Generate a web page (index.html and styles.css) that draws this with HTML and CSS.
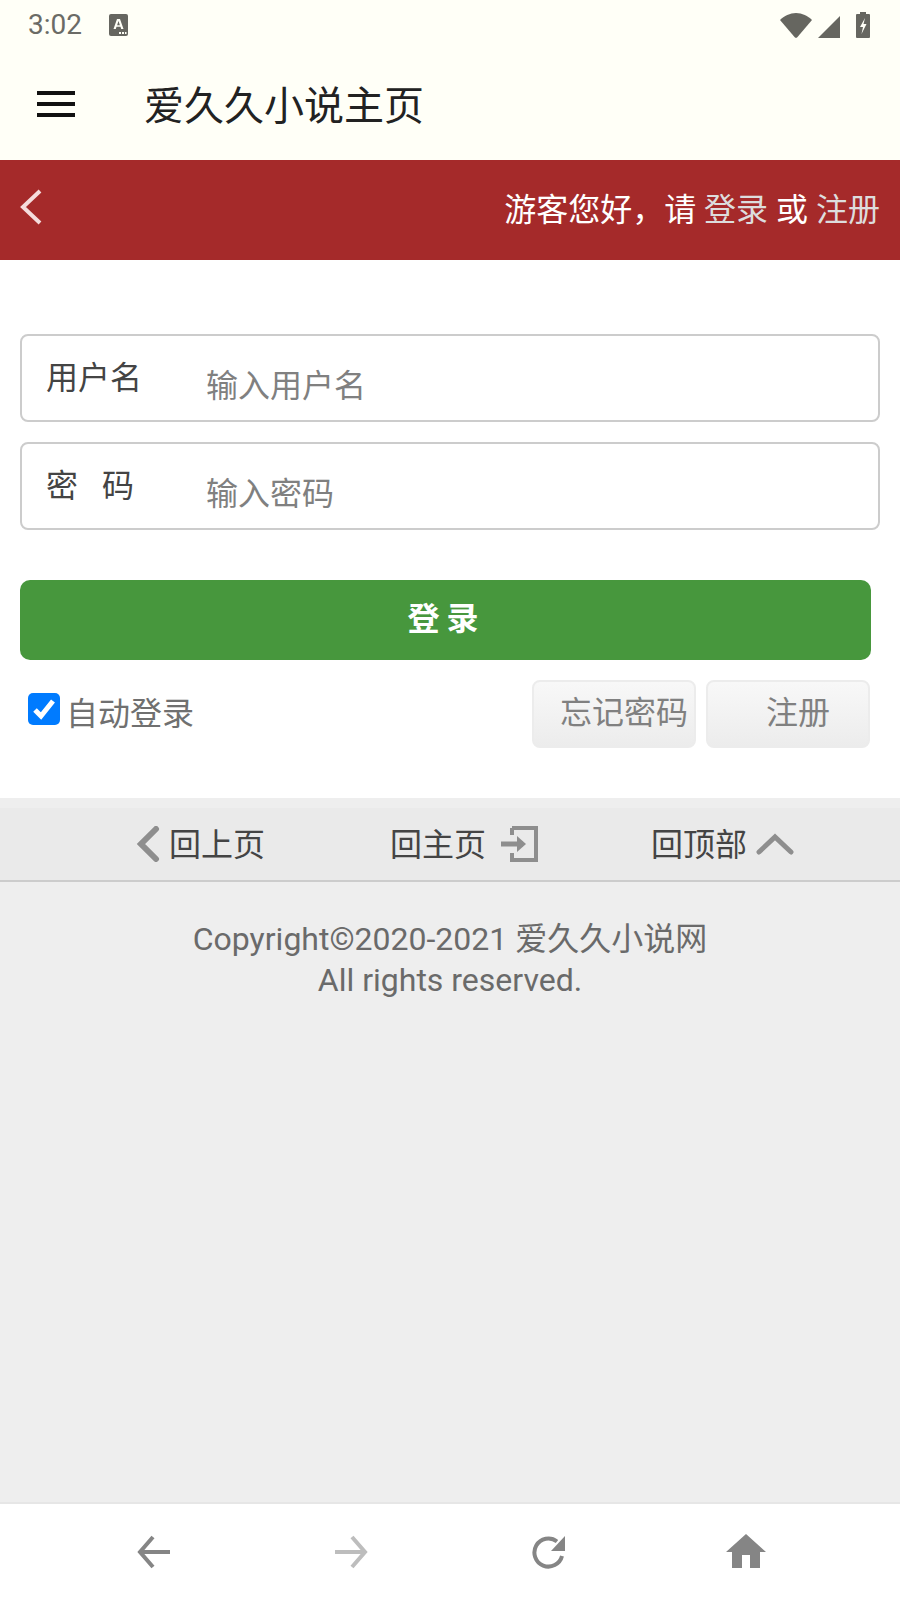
FILE: index.html
```html
<!DOCTYPE html>
<html lang="zh-CN">
<head>
<meta charset="utf-8">
<title>爱久久小说主页</title>
<link rel="stylesheet" href="styles.css">
</head>
<body>
<div class="screen">
  <header class="top">
    <div class="status">
      <span class="time">3:02</span>
      <svg class="ico-a" width="19" height="22" viewBox="0 0 19 22"><rect width="19" height="22" rx="2" fill="#666660"/><path d="M4.500 15 8 5h3l3.500 10h-2.300l-.7-2.200H7.500L6.800 15zm3.600-3.800h2.800L9.500 7z" fill="#fffff7"/><path d="M10 18h2v2h-2zM13 18h2v2h-2zM16 18h1.500v2H16z" fill="#fffff7"/></svg>
      <span class="status-right">
        <svg width="32" height="25" viewBox="0 0 32 25"><path d="M0 7C4 3 10 0 16 0s12 3 16 7L17.500 24a2 2 0 0 1-3 0z" fill="#666660"/></svg>
        <svg width="22" height="22" viewBox="0 0 22 22"><path d="M0 22 22 0v22z" fill="#666660"/></svg>
        <svg class="ico-bat" width="14" height="26" viewBox="0 0 14 26"><path d="M4 0h6v2h3a1 1 0 0 1 1 1v22a1 1 0 0 1-1 1H1a1 1 0 0 1-1-1V3a1 1 0 0 1 1-1h3z" fill="#666660"/><path d="M9 6 4 15h3l-1.500 7L10.500 12H7.500z" fill="#fffff7"/></svg>
      </span>
    </div>
    <div class="appbar">
      <span class="burger"><i></i><i></i><i></i></span>
      <h1 class="app-title">爱久久小说主页</h1>
    </div>
  </header>

  <div class="banner">
    <svg class="banner-back" width="24" height="36" viewBox="0 0 24 36"><path d="M21 2 4 18l17 16" fill="none" stroke="#f5dcdc" stroke-width="4"/></svg>
    <p class="banner-text">游客您好，请 <a>登录</a> 或 <a>注册</a></p>
  </div>

  <main class="login">
    <div class="field"><span class="field-label">用户名</span><span class="field-input">输入用户名</span></div>
    <div class="field"><span class="field-label">密<span class="gap"></span>码</span><span class="field-input">输入密码</span></div>
    <div class="submit">登 录</div>
    <div class="options">
      <label class="remember">
        <span class="check"><svg width="32" height="32" viewBox="0 0 32 32"><path d="M7 17l6 6L25 8" fill="none" stroke="#fff" stroke-width="5"/></svg></span>
        自动登录
      </label>
      <div class="opt-btns">
        <span class="opt-btn">忘记密码</span>
        <span class="opt-btn opt-reg">注册</span>
      </div>
    </div>
  </main>

  <footer class="foot">
    <nav class="foot-nav">
      <span class="foot-item foot-prev">
        <svg class="foot-ico" width="24" height="36" viewBox="0 0 24 36"><path d="M20 3 5 18l15 15" fill="none" stroke="#8e8e8e" stroke-width="6" stroke-linecap="round"/></svg>
        回上页
      </span>
      <span class="foot-item foot-home">
        回主页
        <svg class="foot-ico" width="38" height="36" viewBox="0 0 38 36"><path d="M12 2h24v32H12V27M12 2v7" fill="none" stroke="#8e8e8e" stroke-width="4"/><path d="M1 18h22" fill="none" stroke="#8e8e8e" stroke-width="5"/><path d="M17 10l9 8-9 8z" fill="#8e8e8e"/></svg>
      </span>
      <span class="foot-item foot-up">
        回顶部
        <svg class="foot-ico" width="38" height="22" viewBox="0 0 38 22"><path d="M3 19 19 4l16 15" fill="none" stroke="#8e8e8e" stroke-width="5" stroke-linecap="round"/></svg>
      </span>
    </nav>
    <p class="copy">Copyright©2020-2021 爱久久小说网<br>All rights reserved.</p>
  </footer>

  <div class="browser-bar">
    <svg width="34" height="34" viewBox="0 0 34 34"><path d="M3 17h30M16 2 3 17l13 15" fill="none" stroke="#858585" stroke-width="4"/></svg>
    <svg width="34" height="34" viewBox="0 0 34 34"><path d="M1 17h30M18 2l13 15-13 15" fill="none" stroke="#bdbdbd" stroke-width="4"/></svg>
    <svg width="34" height="34" viewBox="0 0 34 34"><path d="M26 6.500A14 14 0 1 0 31 21" fill="none" stroke="#858585" stroke-width="4"/><path d="M34 1v15H20z" fill="#858585"/></svg>
    <svg class="ico-home" width="40" height="34" viewBox="0 0 40 34"><path d="M20 0 40 18h-6v16H24V21h-8v13H6V18H0z" fill="#858585"/></svg>
  </div>
</div>
</body>
</html>
```

FILE: styles.css
```css
* { box-sizing: border-box; }
html, body { margin: 0; padding: 0; }
body {
  font-family: Roboto, "Noto Sans CJK SC", sans-serif;
  background: #eee;
}
.screen {
  width: 900px;
  height: 1600px;
  display: flex;
  flex-direction: column;
  overflow: hidden;
}
.top { height: 160px; background: #fffff7; flex: none; }
.status {
  height: 53px;
  display: flex;
  align-items: center;
  padding: 0 30px 3px 28px;
  color: #6b6b66;
}
.time { font-size: 28px; line-height: 52px; }
.ico-a { margin-left: 27px; }
.status-right { margin-left: auto; display: flex; align-items: flex-end; gap: 6px; }
.ico-bat { margin-left: 10px; }
.appbar { height: 107px; display: flex; align-items: center; padding-left: 37px; }
.burger { display: flex; flex-direction: column; gap: 7px; width: 38px; margin-top: -5px; }
.burger i { display: block; height: 4px; background: #111; }
.app-title {
  margin: 0 0 0 69px;
  font-size: 40px;
  font-weight: 400;
  color: #222;
  line-height: 50px;
}
.banner {
  height: 100px;
  flex: none;
  background: #a52a2a;
  display: flex;
  align-items: center;
  justify-content: space-between;
  padding: 0 20px 0 19px;
}
.banner-back { margin-top: -7px; }
.banner-text { margin: 0; font-size: 32px; line-height: 100px; color: #fff; }
.banner-text a { color: #ddd; }
.login { background: #fff; height: 538px; flex: none; padding: 74px 20px 0; }
.field {
  height: 88px;
  border: 2px solid #ccc;
  border-radius: 8px;
  margin-bottom: 20px;
  display: flex;
  padding-left: 24px;
}
.field-label {
  width: 160px;
  font-size: 32px;
  line-height: 84px;
  color: #444;
}
.gap { display: inline-block; width: 24px; }
.field-input {
  font-size: 32px;
  line-height: 100px;
  color: #808080;
}
.submit {
  width: 851px;
  height: 80px;
  margin-top: 50px;
  background: #47973d;
  border-radius: 10px;
  color: #fff;
  font-size: 32px;
  font-weight: 700;
  line-height: 78px;
  text-align: center;
  word-spacing: -1px;
  padding-right: 5px;
}
.options { display: flex; justify-content: space-between; margin-top: 20px; width: 850px; padding-left: 8px; }
.remember {
  display: flex;
  align-items: flex-start;
  gap: 6px;
  font-size: 32px;
  line-height: 68px;
  color: #707070;
}
.check {
  width: 32px;
  height: 32px;
  margin-top: 13px;
  background: #007bff;
  border-radius: 5px;
  display: block;
  flex: none;
}
.check svg { display: block; }
.opt-btns { display: flex; gap: 10px; }
.opt-btn {
  width: 164px;
  height: 68px;
  border: 2px solid #ececec;
  border-radius: 8px;
  background: linear-gradient(#f8f8f8, #ececec);
  color: #808080;
  font-size: 32px;
  line-height: 62px;
  text-align: right;
  padding-right: 6px;
}
.opt-reg { padding-right: 38px; }
.foot { flex: 1; background: #eee; padding-top: 10px; }
.foot-nav {
  height: 74px;
  background: #eaeaea;
  border-bottom: 2px solid #ccc;
  display: flex;
  padding-left: 136px;
  color: #444;
  font-size: 32px;
}
.foot-item { display: flex; align-items: center; height: 68px; }
.foot-ico { position: relative; top: 2px; }
.foot-prev { gap: 9px; width: 254px; }
.foot-home { gap: 14px; width: 261px; }
.foot-up { gap: 9px; }
.copy {
  margin: 37px 0 0;
  text-align: center;
  font-size: 32px;
  line-height: 41px;
  color: #6a6a6a;
}
.browser-bar {
  height: 98px;
  flex: none;
  background: #fff;
  border-top: 2px solid #e6e6e6;
  display: flex;
  align-items: flex-start;
  padding: 31px 0 0 137px;
  gap: 163px;
}
.ico-home { margin: -1px 0 0 -2px; }
```
